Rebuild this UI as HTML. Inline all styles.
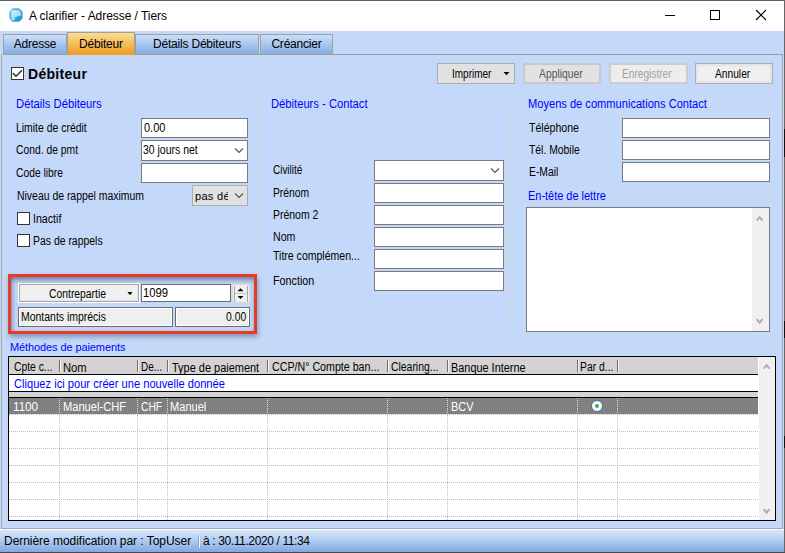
<!DOCTYPE html>
<html><head><meta charset="utf-8">
<style>
*{box-sizing:border-box;margin:0;padding:0}
html,body{width:785px;height:553px;overflow:hidden;background:#C4D9F9;font-family:"Liberation Sans",sans-serif;font-size:11px;color:#000}
.a{position:absolute}
.t{position:absolute;white-space:nowrap;line-height:1}
.lbl{letter-spacing:-0.25px}
.L{font-size:12px;transform-origin:0 0}
.S{font-size:12px;transform-origin:0 0}
.hd{letter-spacing:-0.1px}
.gr{letter-spacing:-0.05px}
.h{color:#0000FF;font-size:12px}
.hl{position:absolute;height:1px;background:#D3D3D3}
.vl{position:absolute;width:1px;background:#D3D3D3}
.tb{position:absolute;background:#fff;border:1px solid #7A7A7A}
.chev{position:absolute;width:6px;height:6px;border-right:1px solid #444;border-bottom:1px solid #444;transform:rotate(45deg)}
.cb{position:absolute;width:13px;height:13px;background:#fff;border:1px solid #333}
.btn{position:absolute;background:#E1E1E1;border:1px solid #ADADAD;text-align:center;letter-spacing:-0.3px;line-height:1}
.btnd{position:absolute;background:#E6E6E6;border:2px solid #CCCCCC;color:#7A7A7A;text-align:center;letter-spacing:-0.3px;line-height:1}
.tab{position:absolute;border:1px solid #A0A0A0;border-bottom:none;background:linear-gradient(#CADFF9,#87ADE2);text-align:center;font-size:12px;letter-spacing:-0.2px;line-height:1}
</style></head><body>
<!-- title bar -->
<div class="a" style="left:0;top:0;width:785px;height:31px;background:#fff;border-top:1px solid #606060"></div>
<div class="a" style="left:784px;top:0;width:1px;height:553px;background:#666"></div>
<!-- icon -->
<svg class="a" style="left:9px;top:8px" width="14" height="14" viewBox="0 0 14 14">
<defs><linearGradient id="ig" x1="0" y1="0" x2="1" y2="1"><stop offset="0" stop-color="#5FCBEE"/><stop offset="1" stop-color="#0E92C9"/></linearGradient>
<linearGradient id="hg" x1="0" y1="0" x2="1" y2="1"><stop offset="0" stop-color="#F4FBFE"/><stop offset="1" stop-color="#9CD9F0"/></linearGradient></defs>
<path d="M3.5 0.3H10L13.5 3.5V10.5L10 13.8H3.5L0.4 10.5V3.5Z" fill="url(#ig)"/>
<path d="M2.2 2.2H9.5L12 4.5V7.5Q9 8 6 9.2L5.6 12.2H2.4Z" fill="url(#hg)" opacity="0.85"/>
</svg>
<div class="t" style="left:29px;top:10px;font-size:12px;letter-spacing:-0.05px;color:#000">A clarifier - Adresse / Tiers</div>
<!-- window controls -->
<div class="a" style="left:665px;top:15px;width:10px;height:1px;background:#000"></div>
<div class="a" style="left:710px;top:10px;width:10px;height:10px;border:1px solid #000"></div>
<svg class="a" style="left:755px;top:9px" width="12" height="12" viewBox="0 0 12 12"><path d="M1 1L11 11M11 1L1 11" stroke="#000" stroke-width="1.1"/></svg>

<!-- tab page border -->
<div class="a" style="left:1px;top:54px;width:782px;height:475px;border:1px solid #A8A8A8;border-top:none"></div>
<div class="a" style="left:3px;top:54px;width:780px;height:1px;background:#A0A0A0"></div>
<!-- tabs -->
<div class="tab" style="left:3px;top:34px;width:64px;height:21px;padding-top:3px;border-bottom:1px solid #A0A0A0">Adresse</div>
<div class="tab" style="left:135px;top:34px;width:124px;height:21px;padding-top:3px;border-bottom:1px solid #A0A0A0">Détails Débiteurs</div>
<div class="tab" style="left:260px;top:34px;width:73px;height:21px;padding-top:3px;border-bottom:1px solid #A0A0A0">Créancier</div>
<div class="tab" style="left:67px;top:32px;width:68px;height:23px;padding-top:5px;background:linear-gradient(#FBDE90,#EE9B22)">Débiteur</div>

<!-- Débiteur check -->
<div class="cb" style="left:11px;top:67px"></div>
<svg class="a" style="left:11px;top:67px" width="13" height="13" viewBox="0 0 13 13"><path d="M1.8 6L5 9.3L11 3.2" fill="none" stroke="#333" stroke-width="1.5"/></svg>
<div class="t" style="left:28px;top:67px;font-size:14px;font-weight:bold;letter-spacing:0.3px">Débiteur</div>

<!-- buttons -->
<div class="a" style="left:437px;top:63px;width:78px;height:21px;background:#E1E1E1;border:1px solid #ADADAD"></div>
<div class="t S" style="left:452.2px;top:68px;transform:scaleX(0.8329)">Imprimer</div>
<svg class="a" style="left:503px;top:72px" width="7" height="4"><path d="M0.5 0H6.5L3.5 3.2Z" fill="#000"/></svg>
<div class="a" style="left:523px;top:63px;width:78px;height:21px;background:#E2E2E2;border:2px solid #C8C8C8"></div>
<div class="t S" style="left:538.9px;top:68px;color:#555;transform:scaleX(0.8626)">Appliquer</div>
<div class="a" style="left:609px;top:63px;width:79px;height:21px;background:#EDEDED;border:2px solid #CCCCCC"></div>
<div class="t S" style="left:621.6px;top:68px;color:#A2A2A2;transform:scaleX(0.8455)">Enregistrer</div>
<div class="a" style="left:695px;top:63px;width:78px;height:21px;background:#EFEFEF;border:1px solid #ADADAD;box-shadow:inset 0 0 0 2px #E4E4E4"></div>
<div class="t S" style="left:715.2px;top:68px;transform:scaleX(0.8516)">Annuler</div>

<!-- group 1 -->
<div class="t S" style="left:15.6px;top:98px;color:#0000FF;transform:scaleX(0.9380)">Détails Débiteurs</div>
<div class="hl" style="left:104px;top:104px;width:142px"></div>
<div class="vl" style="left:256px;top:106px;height:228px"></div>
<div class="t L" style="left:16.4px;top:122px;transform:scaleX(0.8689)">Limite de crédit</div>
<div class="t L" style="left:15.6px;top:144px;transform:scaleX(0.8608)">Cond. de pmt</div>
<div class="t L" style="left:15.6px;top:167px;transform:scaleX(0.8581)">Code libre</div>
<div class="t L" style="left:16.6px;top:190px;transform:scaleX(0.8696)">Niveau de rappel maximum</div>
<div class="tb" style="left:141px;top:118px;width:107px;height:20px"></div>
<div class="t S" style="left:144.2px;top:122px;transform:scaleX(0.9158)">0.00</div>
<div class="tb" style="left:141px;top:140px;width:107px;height:21px"></div>
<div class="t S" style="left:143.2px;top:144px;transform:scaleX(0.8719)">30 jours net</div>
<svg class="a" style="left:234px;top:147px" width="11" height="7"><path d="M1 1.5L5 5.5L9 1.5" fill="none" stroke="#505050" stroke-width="1.1"/></svg>
<div class="tb" style="left:141px;top:163px;width:107px;height:20px"></div>
<div class="a" style="left:192px;top:185px;width:56px;height:21px;background:#E1E1E1;border:1px solid #ADADAD"></div>
<div class="t lbl" style="left:195px;top:191px;width:33px;height:14px;overflow:hidden;letter-spacing:0.3px">pas dé</div>
<svg class="a" style="left:234px;top:192px" width="11" height="7"><path d="M1 1.5L5 5.5L9 1.5" fill="none" stroke="#505050" stroke-width="1.1"/></svg>
<div class="cb" style="left:17px;top:212px"></div>
<div class="t L" style="left:32.6px;top:213px;transform:scaleX(0.8868)">Inactif</div>
<div class="cb" style="left:17px;top:234px"></div>
<div class="t L" style="left:32.6px;top:235px;transform:scaleX(0.8698)">Pas de rappels</div>

<!-- red box -->
<div class="a" style="left:8px;top:274px;width:249px;height:60px;border:3px solid #E63A2A;box-shadow:1px 3px 5px rgba(40,50,70,0.4), inset 0 4px 5px -1px rgba(60,80,110,0.6), inset 3px 0 4px -1px rgba(60,80,110,0.3)"></div>
<div class="a" style="left:18px;top:283px;width:122px;height:20px;border:1px solid #fff"></div>
<div class="a" style="left:19px;top:284px;width:120px;height:18px;background:#F0F0F0;border:1px solid #A8A8A8;box-shadow:inset -1px -1px 0 #E3E3E3"></div>
<div class="t L" style="left:48.7px;top:288px;transform:scaleX(0.8634)">Contrepartie</div>
<svg class="a" style="left:127px;top:292px" width="7" height="4"><path d="M0.5 0H5.5L3 3.2Z" fill="#000"/></svg>
<div class="tb" style="left:141px;top:284px;width:90px;height:18px;border-color:#6D6D6D"></div>
<div class="t S" style="left:143.3px;top:287px;transform:scaleX(0.9404)">1099</div>
<div class="a" style="left:232px;top:284px;width:18px;height:19px;background:#F0F0F0;border:1px solid #D8D8D8"></div>
<div class="a" style="left:234px;top:286px;width:14px;height:16px;border-left:1px solid #A8A8A8;border-right:1px solid #A8A8A8"></div>
<div class="a" style="left:235px;top:293px;width:12px;height:1px;background:#C8C8C8"></div>
<svg class="a" style="left:237px;top:288px" width="8" height="12"><path d="M0.5 3.2H6.5L3.5 0.2Z M0.5 8H6.5L3.5 11Z" fill="#000"/></svg>
<div class="a" style="left:18px;top:307px;width:155px;height:20px;background:#EFEFEF;border:1px solid #6D6D6D;box-shadow:inset 0 0 0 1px #fff"></div>
<div class="t L" style="left:20.8px;top:311px;transform:scaleX(0.8718)">Montants imprécis</div>
<div class="a" style="left:175px;top:307px;width:75px;height:20px;background:#EFEFEF;border:1px solid #6D6D6D;box-shadow:inset 0 0 0 1px #fff"></div>
<div class="t S" style="left:226.3px;top:311px;transform:scaleX(0.8635)">0.00</div>

<!-- group 2 -->
<div class="t S" style="left:271.4px;top:98px;color:#0000FF;transform:scaleX(0.9338)">Débiteurs - Contact</div>
<div class="hl" style="left:372px;top:104px;width:132px"></div>
<div class="vl" style="left:508px;top:106px;height:224px"></div>
<div class="t L" style="left:272.6px;top:164px;transform:scaleX(0.8292)">Civilité</div>
<div class="t L" style="left:273.3px;top:187px;transform:scaleX(0.8583)">Prénom</div>
<div class="t L" style="left:273.3px;top:209px;transform:scaleX(0.8722)">Prénom 2</div>
<div class="t L" style="left:273.3px;top:231px;transform:scaleX(0.885)">Nom</div>
<div class="t L" style="left:272.9px;top:250px;transform:scaleX(0.878)">Titre complémen...</div>
<div class="t L" style="left:273.3px;top:275px;transform:scaleX(0.8958)">Fonction</div>
<div class="tb" style="left:374px;top:160px;width:130px;height:21px"></div>
<svg class="a" style="left:490px;top:167px" width="11" height="7"><path d="M1 1.5L5 5.5L9 1.5" fill="none" stroke="#505050" stroke-width="1.1"/></svg>
<div class="tb" style="left:374px;top:183px;width:130px;height:20px"></div>
<div class="tb" style="left:374px;top:205px;width:130px;height:20px"></div>
<div class="tb" style="left:374px;top:227px;width:130px;height:20px"></div>
<div class="tb" style="left:374px;top:249px;width:130px;height:20px"></div>
<div class="tb" style="left:374px;top:271px;width:130px;height:20px"></div>

<!-- group 3 -->
<div class="t S" style="left:527.8px;top:98px;color:#0000FF;transform:scaleX(0.9248)">Moyens de communications Contact</div>
<div class="hl" style="left:712px;top:104px;width:58px"></div>
<div class="t L" style="left:529.2px;top:122px;transform:scaleX(0.88)">Téléphone</div>
<div class="t L" style="left:529.2px;top:144px;transform:scaleX(0.8646)">Tél. Mobile</div>
<div class="t L" style="left:529px;top:166px;transform:scaleX(0.8613)">E-Mail</div>
<div class="tb" style="left:622px;top:118px;width:148px;height:20px"></div>
<div class="tb" style="left:622px;top:140px;width:148px;height:20px"></div>
<div class="tb" style="left:622px;top:162px;width:148px;height:20px"></div>
<div class="t S" style="left:527.7px;top:190px;color:#0000FF;transform:scaleX(0.9121)">En-tête de lettre</div>
<div class="hl" style="left:611px;top:196px;width:159px"></div>
<div class="tb" style="left:526px;top:207px;width:244px;height:125px"></div>
<div class="a" style="left:752px;top:208px;width:17px;height:123px;background:#F0F0F0"></div>
<svg class="a" style="left:756px;top:215px" width="8" height="7"><path d="M0.7 5.6L3.6 2.2L6.5 5.6" fill="none" stroke="#ADADAD" stroke-width="2"/></svg>
<svg class="a" style="left:756px;top:318px" width="8" height="7"><path d="M0.7 1.2L3.6 4.6L6.5 1.2" fill="none" stroke="#ADADAD" stroke-width="2"/></svg>

<!-- grid -->
<div class="t h" style="left:10px;top:342px;font-size:11px;letter-spacing:-0.1px">Méthodes de paiements</div>
<div class="hl" style="left:134px;top:347px;width:642px"></div>
<div class="a" style="left:8px;top:356px;width:768px;height:165px;background:#fff;border:1px solid #000"></div>
<div class="a" style="left:9px;top:357px;width:749px;height:17px;background:#D3D3D3"></div>
<div class="a" style="left:9px;top:374px;width:749px;height:1px;background:#000"></div>
<div class="a" style="left:9px;top:391px;width:749px;height:1px;background:#000"></div>
<div class="a" style="left:9px;top:392px;width:749px;height:5px;background:#D3D3D3"></div>
<div class="a" style="left:9px;top:397px;width:749px;height:1px;background:#000"></div>
<div class="a" style="left:9px;top:398px;width:749px;height:16px;background:#808080"></div>
<div class="a" style="left:759px;top:357px;width:16px;height:163px;background:#F0F0F0"></div>
<svg class="a" style="left:0;top:0" width="785" height="553">
<path d="M9 414.5H758" stroke="#BEBEBE" stroke-dasharray="1 1"/>
<path d="M9 431.5H758" stroke="#BEBEBE" stroke-dasharray="1 1"/>
<path d="M9 448.5H758" stroke="#BEBEBE" stroke-dasharray="1 1"/>
<path d="M9 465.5H758" stroke="#BEBEBE" stroke-dasharray="1 1"/>
<path d="M9 482.5H758" stroke="#BEBEBE" stroke-dasharray="1 1"/>
<path d="M9 499.5H758" stroke="#BEBEBE" stroke-dasharray="1 1"/>
<path d="M9 516.5H758" stroke="#BEBEBE" stroke-dasharray="1 1"/>
<path d="M59.5 398V413" stroke="#E0E0E0" stroke-dasharray="1 1"/>
<path d="M59.5 415V520" stroke="#BEBEBE" stroke-dasharray="1 1"/>
<path d="M137.5 398V413" stroke="#E0E0E0" stroke-dasharray="1 1"/>
<path d="M137.5 415V520" stroke="#BEBEBE" stroke-dasharray="1 1"/>
<path d="M167.5 398V413" stroke="#E0E0E0" stroke-dasharray="1 1"/>
<path d="M167.5 415V520" stroke="#BEBEBE" stroke-dasharray="1 1"/>
<path d="M267.5 398V413" stroke="#E0E0E0" stroke-dasharray="1 1"/>
<path d="M267.5 415V520" stroke="#BEBEBE" stroke-dasharray="1 1"/>
<path d="M387.5 398V413" stroke="#E0E0E0" stroke-dasharray="1 1"/>
<path d="M387.5 415V520" stroke="#BEBEBE" stroke-dasharray="1 1"/>
<path d="M447.5 398V413" stroke="#E0E0E0" stroke-dasharray="1 1"/>
<path d="M447.5 415V520" stroke="#BEBEBE" stroke-dasharray="1 1"/>
<path d="M577.5 398V413" stroke="#E0E0E0" stroke-dasharray="1 1"/>
<path d="M577.5 415V520" stroke="#BEBEBE" stroke-dasharray="1 1"/>
<path d="M617.5 398V413" stroke="#E0E0E0" stroke-dasharray="1 1"/>
<path d="M617.5 415V520" stroke="#BEBEBE" stroke-dasharray="1 1"/>
<path d="M59.5 360V372" stroke="#6E6E6E"/><path d="M60.5 360V372" stroke="#F4F4F4"/>
<path d="M137.5 360V372" stroke="#6E6E6E"/><path d="M138.5 360V372" stroke="#F4F4F4"/>
<path d="M167.5 360V372" stroke="#6E6E6E"/><path d="M168.5 360V372" stroke="#F4F4F4"/>
<path d="M267.5 360V372" stroke="#6E6E6E"/><path d="M268.5 360V372" stroke="#F4F4F4"/>
<path d="M387.5 360V372" stroke="#6E6E6E"/><path d="M388.5 360V372" stroke="#F4F4F4"/>
<path d="M447.5 360V372" stroke="#6E6E6E"/><path d="M448.5 360V372" stroke="#F4F4F4"/>
<path d="M577.5 360V372" stroke="#6E6E6E"/><path d="M578.5 360V372" stroke="#F4F4F4"/>
<path d="M617.5 360V372" stroke="#6E6E6E"/><path d="M618.5 360V372" stroke="#F4F4F4"/>
</svg>
<div class="t S" style="left:13.6px;top:361px;transform:scaleX(0.8599)">Cpte c...</div>
<div class="t S" style="left:62.8px;top:362px;transform:scaleX(0.9345)">Nom</div>
<div class="t S" style="left:140.8px;top:361px;transform:scaleX(0.8282)">De...</div>
<div class="t S" style="left:171.6px;top:362px;transform:scaleX(0.9136)">Type de paiement</div>
<div class="t S" style="left:271.5px;top:361px;transform:scaleX(0.8883)">CCP/N° Compte ban...</div>
<div class="t S" style="left:391.2px;top:361px;transform:scaleX(0.8672)">Clearing...</div>
<div class="t S" style="left:450.5px;top:362px;transform:scaleX(0.9085)">Banque Interne</div>
<div class="t S" style="left:580.4px;top:361px;transform:scaleX(0.8636)">Par d...</div>
<div class="t S" style="left:13.9px;top:378px;color:#0000FF;transform:scaleX(0.9271)">Cliquez ici pour créer une nouvelle donnée</div>
<div class="t S" style="left:12.7px;top:401px;color:#fff;transform:scaleX(0.9727)">1100</div>
<div class="t S" style="left:62.5px;top:401px;color:#fff;transform:scaleX(0.9263)">Manuel-CHF</div>
<div class="t S" style="left:141.3px;top:401px;color:#fff;transform:scaleX(0.8521)">CHF</div>
<div class="t S" style="left:170.2px;top:401px;color:#fff;transform:scaleX(0.9231)">Manuel</div>
<div class="t S" style="left:450.5px;top:401px;color:#fff;transform:scaleX(0.9141)">BCV</div>
<div class="a" style="left:591px;top:400px;width:12px;height:12px;border-radius:50%;background:#fff;border:1px solid #3C6FA8"></div>
<div class="a" style="left:595px;top:404px;width:4px;height:4px;border-radius:50%;background:#2DB84A"></div>
<svg class="a" style="left:763px;top:363px" width="8" height="7"><path d="M0.7 5.6L3.6 2.2L6.5 5.6" fill="none" stroke="#ADADAD" stroke-width="2"/></svg>
<svg class="a" style="left:763px;top:508px" width="8" height="7"><path d="M0.7 1.2L3.6 4.6L6.5 1.2" fill="none" stroke="#ADADAD" stroke-width="2"/></svg>

<div class="a" style="left:784px;top:129px;width:1px;height:28px;background:#111"></div>
<div class="a" style="left:784px;top:321px;width:1px;height:17px;background:#111"></div>
<div class="a" style="left:784px;top:436px;width:1px;height:12px;background:#111"></div>
<!-- status bar -->
<div class="a" style="left:0;top:529px;width:784px;height:23px;background:linear-gradient(#FAFCFF 0px,#FAFCFF 1px,#D8E8FC 1px,#B9D3F4 40%,#80A8E2 100%)"></div>
<div class="a" style="left:0;top:552px;width:785px;height:1px;background:#4A4A4A"></div>
<div class="t" style="left:4px;top:535px;font-size:12px;letter-spacing:-0.04px">Dernière modification par : TopUser</div>
<div class="a" style="left:198px;top:535px;width:1px;height:13px;background:#8CA6C8"></div>
<div class="a" style="left:199px;top:535px;width:1px;height:13px;background:#F4F8FD"></div>
<div class="t" style="left:203px;top:535px;font-size:12px;letter-spacing:-0.38px">à : 30.11.2020 / 11:34</div>
</body></html>
